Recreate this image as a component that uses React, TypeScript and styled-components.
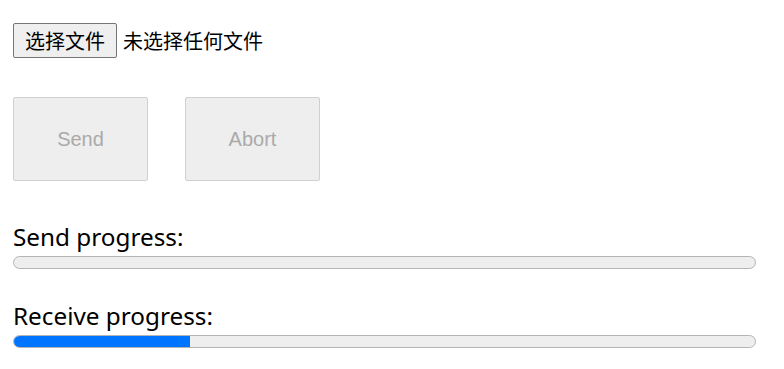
import React from "react";
import styled, { createGlobalStyle } from "styled-components";

const Global = createGlobalStyle`
  html, body { margin: 0; padding: 0; background: #fff; }
  body { font-family: "Noto Sans", "Noto Sans CJK SC", sans-serif; color: #000; }
`;

const Page = styled.div`
  display: flex;
  flex-direction: column;
  padding: 23px 28px 0 13px;
`;

const FileRow = styled.div`
  display: flex;
  align-items: center;
  gap: 6px;
  height: 35px;
`;

const FileButton = styled.button`
  box-sizing: border-box;
  height: 35px;
  width: 104px;
  padding: 0;
  border: 1px solid #767676;
  border-radius: 2px;
  background: #efefef;
  font-family: "Noto Sans CJK SC", sans-serif;
  font-size: 20px;
  color: #000;
`;

const FileStatus = styled.span`
  font-family: "Noto Sans CJK SC", sans-serif;
  font-size: 20px;
  line-height: 35px;
`;

const ButtonRow = styled.div`
  display: flex;
  gap: 37px;
  margin-top: 39px;
`;

const ActionButton = styled.button`
  box-sizing: border-box;
  width: 135px;
  height: 84px;
  border: 1px solid #d0d0d0;
  border-radius: 2px;
  background: #eeeeee;
  color: #aaaaaa;
  font-family: "Liberation Sans", Arial, sans-serif;
  font-size: 20px;
  padding: 0;
`;

const Label = styled.div<{ $top: number }>`
  font-family: "Noto Sans", sans-serif;
  font-size: 24.3px;
  line-height: 32px;
  margin-top: ${(p) => p.$top}px;
`;

const Track = styled.div`
  box-sizing: border-box;
  height: 13px;
  border: 1px solid #b4b4b4;
  border-radius: 7px;
  background: #eeeeee;
  overflow: hidden;
  margin-top: 3px;
`;

const Fill = styled.div`
  height: 100%;
  background: #0075ff;
`;

export default function App() {
  return (
    <>
      <Global />
      <Page>
        <FileRow>
          <FileButton>选择文件</FileButton>
          <FileStatus>未选择任何文件</FileStatus>
        </FileRow>
        <ButtonRow>
          <ActionButton disabled>Send</ActionButton>
          <ActionButton disabled>Abort</ActionButton>
        </ButtonRow>
        <Label $top={40}>Send progress:</Label>
        <Track>
          <Fill style={{ width: "0%" }} />
        </Track>
        <Label $top={31}>Receive progress:</Label>
        <Track>
          <Fill style={{ width: "23.7%" }} />
        </Track>
      </Page>
    </>
  );
}
